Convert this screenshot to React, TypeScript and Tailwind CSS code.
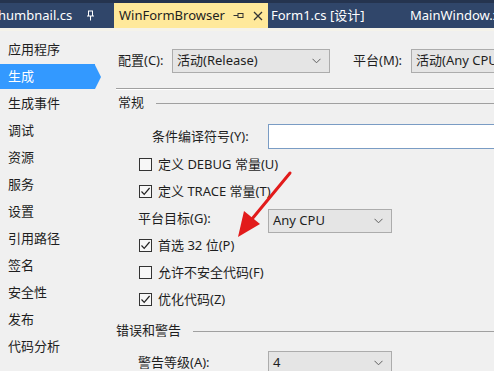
import React from "react";

const font = { fontFamily: '"Segoe UI", "Noto Sans", "Noto Sans CJK SC", sans-serif' };

function Chevron() {
  return (
    <svg width="9" height="6" viewBox="0 0 9 6" className="shrink-0">
      <path d="M0.5 0.8 L4.5 4.8 L8.5 0.8" fill="none" stroke="#606060" strokeWidth="1" />
    </svg>
  );
}

function Select({ value, w }: { value: string; w: string }) {
  return (
    <div
      className={`flex h-[24px] ${w} shrink-0 items-center justify-between border border-[#acacac] bg-[#e5e5e5] pl-[4px] pr-[8px] text-[13px] text-[#1e1e1e]`}
    >
      <span className="whitespace-nowrap">{value}</span>
      <Chevron />
    </div>
  );
}

function Check({ label, checked }: { label: string; checked?: boolean }) {
  return (
    <div className="flex h-[27px] items-center pl-[23px]">
      <div className="flex h-[13px] w-[13px] items-center justify-center border border-[#333333] bg-[#f7f7f7]">
        {checked && (
          <svg width="11" height="11" viewBox="0 0 11 11">
            <path d="M1.5 5.5 L4.2 8.3 L9.6 2" fill="none" stroke="#222" strokeWidth="1.2" />
          </svg>
        )}
      </div>
      <span className="ml-[6px] whitespace-nowrap text-[13px] text-[#1e1e1e]">{label}</span>
    </div>
  );
}

function Header({ text }: { text: string }) {
  return (
    <div className="flex h-[20px] items-center">
      <span className="whitespace-nowrap text-[13px] text-[#1e1e1e]">{text}</span>
      <div className="ml-[12px] h-px flex-1 bg-[#a0a0a0]" />
    </div>
  );
}

export default function App() {
  const nav = ["应用程序", "生成", "生成事件", "调试", "资源", "服务", "设置", "引用路径", "签名", "安全性", "发布", "代码分析"];

  return (
    <div className="relative h-[371px] w-[494px] overflow-hidden bg-[#f0f0f0]" style={font}>
      {/* tab well */}
      <div className="h-[3px] bg-[#25344f]" />
      <div className="flex h-[25px] items-stretch bg-[#30466a] text-[13px] text-white">
        <div className="flex w-[114px] shrink-0 items-center">
          <span className="ml-[-2px] whitespace-nowrap">humbnail.cs</span>
          <svg width="9" height="11" viewBox="0 0 9 11" className="ml-[14px]">
            <path d="M2 1 H7 M2.5 1 V6 M6.5 1 V6 M1 6 H8 M4.5 6 V10.5" fill="none" stroke="#fff" strokeWidth="1" />
          </svg>
        </div>
        <div className="flex w-[154px] shrink-0 items-center bg-[#ffe99a] text-[#1e1e1e]">
          <span className="ml-[5px] whitespace-nowrap">WinFormBrowser</span>
          <svg width="11" height="9" viewBox="0 0 11 9" className="ml-[8px]">
            <path d="M0.5 4.5 H5 M5 2 V7 M5 2.5 H10 M5 6.5 H10 M10 2 V7" fill="none" stroke="#333" strokeWidth="1" />
          </svg>
          <svg width="10" height="10" viewBox="0 0 10 10" className="ml-[9px]">
            <path d="M1 1 L9 9 M9 1 L1 9" fill="none" stroke="#333" strokeWidth="1.3" />
          </svg>
        </div>
        <div className="flex w-[139px] shrink-0 items-center">
          <span className="ml-[3px] whitespace-nowrap">Form1.cs [设计]</span>
        </div>
        <div className="flex items-center">
          <span className="ml-[3px] whitespace-nowrap">MainWindow.xaml</span>
        </div>
      </div>
      <div className="h-[3px] bg-[#f5f3ea]" />

      <div className="flex">
        {/* sidebar */}
        <div className="w-[102px] shrink-0 pt-[5px]">
          {nav.map((n) =>
            n === "生成" ? (
              <div key={n} className="flex h-[27px] items-center">
                <div className="flex h-[25px] w-[95px] items-center bg-[#3399ff] pl-[8px] text-[13px] text-white">{n}</div>
                <div className="h-0 w-0 border-y-[12.5px] border-l-[6px] border-y-transparent border-l-[#3399ff]" />
              </div>
            ) : (
              <div key={n} className="flex h-[27px] items-center pl-[8px] text-[13px] text-[#1e1e1e]">
                {n}
              </div>
            )
          )}
        </div>

        {/* main */}
        <div className="min-w-0 flex-1 pl-[14px]">
          <div className="mt-[18px] flex items-center">
            <span className="w-[56px] shrink-0 pl-[2px] text-[13px] text-[#1e1e1e]">配置(C):</span>
            <Select value="活动(Release)" w="w-[158px]" />
            <span className="ml-[23px] w-[58px] shrink-0 text-[13px] text-[#1e1e1e]">平台(M):</span>
            <Select value="活动(Any CPU)" w="w-[120px]" />
          </div>

          <div className="mt-[15px] border-t border-[#a0a0a0] border-b border-b-white" />

          <div className="mt-[3px] pl-[2px]">
            <Header text="常规" />
          </div>

          <div className="mt-[11px] flex items-center">
            <span className="w-[152px] shrink-0 pl-[36px] whitespace-nowrap text-[13px] text-[#1e1e1e]">条件编译符号(Y):</span>
            <div className="h-[25px] w-[240px] shrink-0 border border-[#7a9cc4] bg-white" />
          </div>

          <div className="mt-[2px]">
            <Check label="定义 DEBUG 常量(U)" />
            <Check label="定义 TRACE 常量(T)" checked />
            <div className="flex h-[27px] items-center pl-[22px]">
              <span className="w-[130px] shrink-0 text-[13px] text-[#1e1e1e]">平台目标(G):</span>
              <div className="mt-[4px]">
                <Select value="Any CPU" w="w-[124px]" />
              </div>
            </div>
            <Check label="首选 32 位(P)" checked />
            <Check label="允许不安全代码(F)" />
            <Check label="优化代码(Z)" checked />
          </div>

          <div className="mt-[8px]">
            <Header text="错误和警告" />
          </div>

          <div className="mt-[10px] flex items-center">
            <span className="w-[152px] shrink-0 pl-[22px] text-[13px] text-[#1e1e1e]">警告等级(A):</span>
            <Select value="4" w="w-[124px]" />
          </div>
        </div>
      </div>

      {/* red annotation arrow */}
      <svg className="pointer-events-none absolute left-0 top-0" width="494" height="371" viewBox="0 0 494 371">
        <path d="M290 173 L252 219" stroke="#e21b1b" strokeWidth="3" strokeLinecap="round" fill="none" />
        <path d="M238 237 L244 211 L260 224 Z" fill="#e21b1b" />
      </svg>
    </div>
  );
}
